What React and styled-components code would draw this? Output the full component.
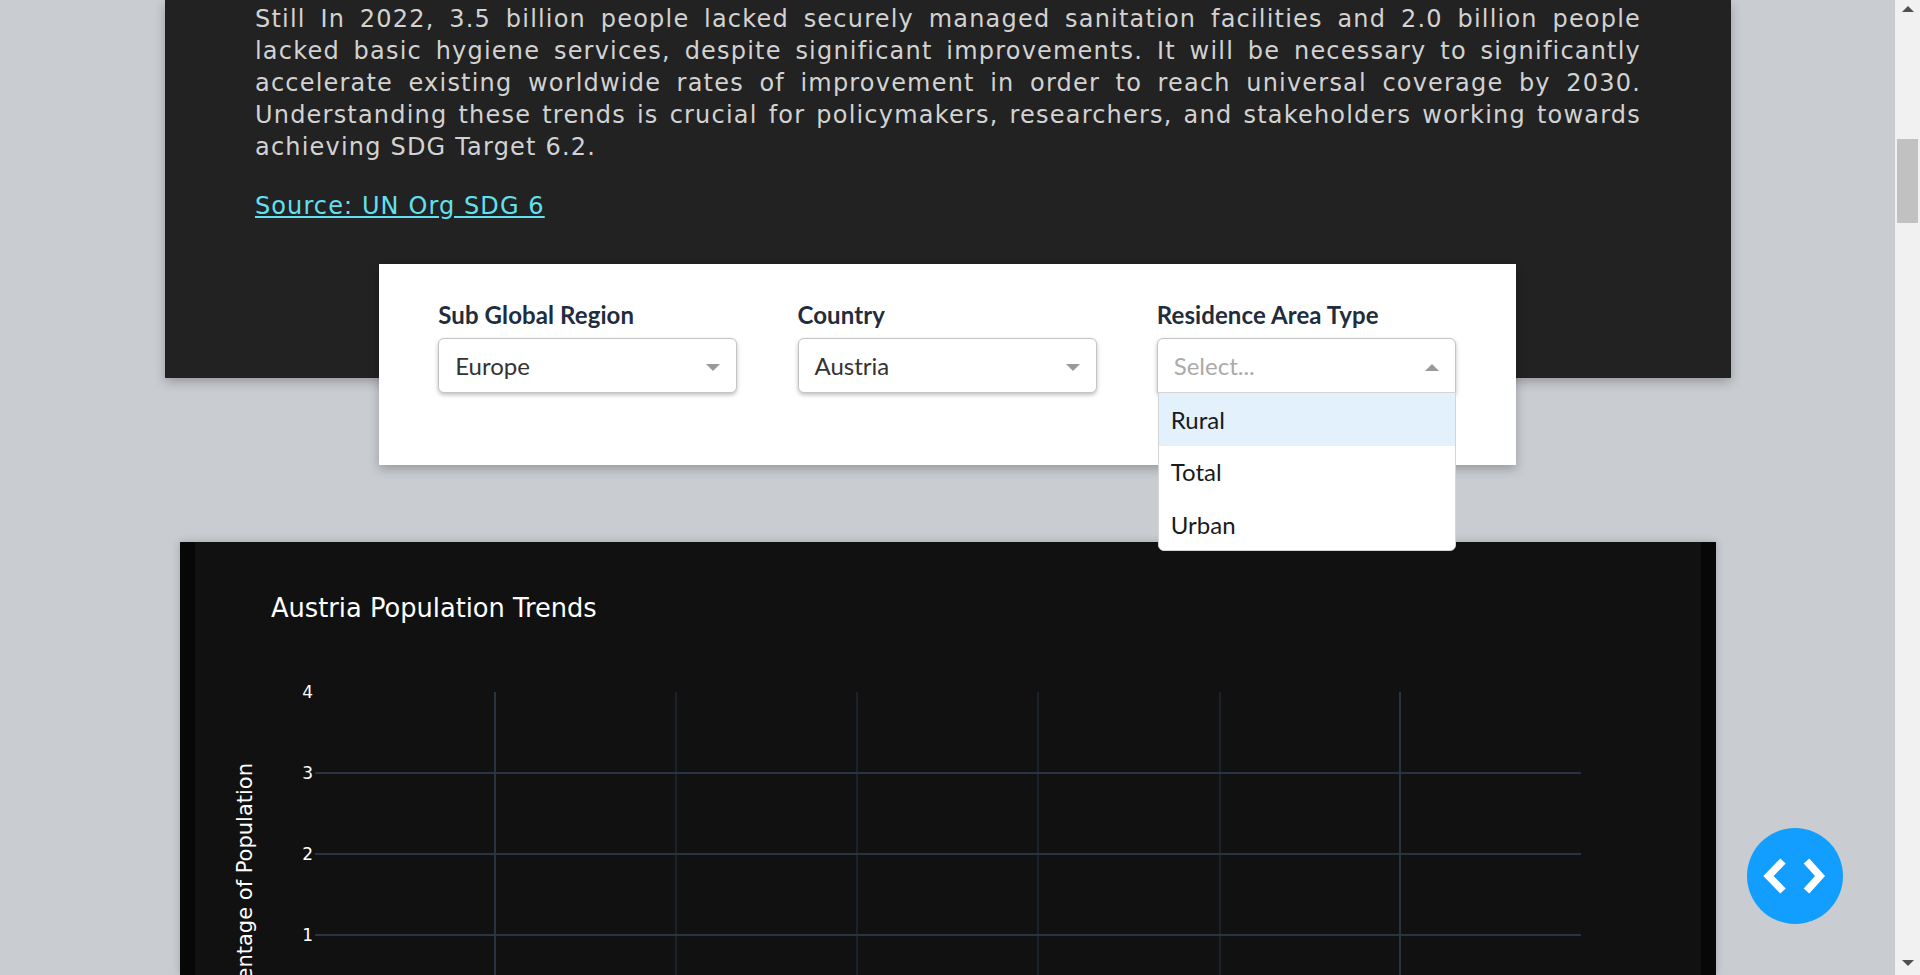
import React from "react";
import styled, { createGlobalStyle } from "styled-components";

const GlobalStyle = createGlobalStyle`
  html, body {
    margin: 0;
    height: 100%;
    overflow: hidden;
    background: #c9ccd1;
  }
  * {
    box-sizing: border-box;
  }
`;

const regions = [
  { label: "Sub Global Region", value: "Europe" },
  { label: "Country", value: "Austria" },
  { label: "Residence Area Type", open: true, options: ["Rural", "Total", "Urban"] },
];

const thinLines = [481, 662, 843, 1025];
const thickLines = [300, 1205];
const rows = [
  { y: 231, tick: "3" },
  { y: 312, tick: "2" },
  { y: 393, tick: "1" },
];

const App = () => {
  return (
    <Page>
      <GlobalStyle />
      <Main>
        <IntroPanel>
          <IntroText>
            Still In 2022, 3.5 billion people lacked securely managed sanitation facilities and 2.0 billion people
            lacked basic hygiene services, despite significant improvements. It will be necessary to significantly
            accelerate existing worldwide rates of improvement in order to reach universal coverage by 2030.
            Understanding these trends is crucial for policymakers, researchers, and stakeholders working towards
            achieving SDG Target 6.2.
          </IntroText>
          <SourceLink href="#source">Source: UN Org SDG 6</SourceLink>
        </IntroPanel>

        <FilterCard>
          {regions.map((region) => (
            <Field key={region.label}>
              <FieldLabel>{region.label}</FieldLabel>
              <SelectBox $open={region.open}>
                <SelectValue $placeholder={!region.value}>{region.value || "Select..."}</SelectValue>
                <Caret $up={region.open} />
                {region.options && (
                  <Menu>
                    {region.options.map((option, i) => (
                      <MenuOption key={option} $active={i === 0}>
                        {option}
                      </MenuOption>
                    ))}
                  </Menu>
                )}
              </SelectBox>
            </Field>
          ))}
        </FilterCard>

        <ChartFrame>
          <ChartSvg width="1506" height="433" viewBox="0 0 1506 433">
            <ChartTitle x="76" y="75">Austria Population Trends</ChartTitle>
            <AxisTitle transform="translate(50 352) rotate(-90)" textAnchor="middle" y="7">
              Percentage of Population
            </AxisTitle>
            {thinLines.map((x) => (
              <line key={x} x1={x} y1="150" x2={x} y2="433" stroke="#283442" strokeWidth="1" />
            ))}
            {thickLines.map((x) => (
              <line key={x} x1={x} y1="150" x2={x} y2="433" stroke="#283442" strokeWidth="2" />
            ))}
            {rows.map((row) => (
              <line key={row.y} x1="120" y1={row.y} x2="1386" y2={row.y} stroke="#283442" strokeWidth="2" />
            ))}
            <TickLabel x="118" y="156" textAnchor="end">4</TickLabel>
            {rows.map((row) => (
              <TickLabel key={row.tick} x="118" y={row.y + 6} textAnchor="end">
                {row.tick}
              </TickLabel>
            ))}
          </ChartSvg>
        </ChartFrame>

        <CodeButton aria-label="Toggle code">
          <svg width="96" height="96" viewBox="0 0 96 96" fill="none" stroke="#fff" strokeWidth="7.5">
            <polyline points="36,33 21.5,48 36,63" />
            <polyline points="59.5,33 73,48 59.5,63" />
          </svg>
        </CodeButton>
      </Main>

      <Scrollbar>
        <ScrollArrow $up />
        <ScrollThumb />
        <ScrollArrow />
      </Scrollbar>
    </Page>
  );
};
export default App;

const Page = styled.div`
  display: flex;
  width: 1920px;
  height: 975px;
  overflow: hidden;
  background: #c9ccd1;
`;

const Main = styled.main`
  flex: 1;
  min-width: 0;
  height: 975px;
  overflow: hidden;
`;

const IntroPanel = styled.section`
  width: 1566px;
  height: 378px;
  margin-left: 165px;
  padding: 3px 90px 0;
  background: #222222;
  box-shadow: 0 4px 10px rgba(0, 0, 0, 0.25);
`;

const IntroText = styled.p`
  margin: 0 0 27px;
  color: #d2d2d2;
  font-family: "DejaVu Sans", sans-serif;
  font-size: 24px;
  line-height: 32px;
  letter-spacing: 1.2px;
  text-align: justify;
`;

const SourceLink = styled.a`
  color: #62e0f0;
  font-family: "DejaVu Sans", sans-serif;
  font-size: 24px;
  line-height: 32px;
  letter-spacing: 1.1px;
  text-decoration: underline;
`;

const FilterCard = styled.section`
  position: relative;
  z-index: 2;
  display: flex;
  gap: 60.25px;
  width: 1137px;
  height: 201px;
  margin: -114px 0 0 379px;
  padding: 31px 60px 0 59.25px;
  background: #ffffff;
  box-shadow: 0 4px 10px rgba(0, 0, 0, 0.25);
`;

const Field = styled.div`
  width: 299px;
`;

const FieldLabel = styled.div`
  height: 43px;
  color: #1f2d3d;
  font-family: Lato, sans-serif;
  font-size: 24px;
  font-weight: 700;
  line-height: 40px;
  letter-spacing: 0.1px;
`;

const SelectBox = styled.div`
  position: relative;
  display: flex;
  align-items: center;
  height: 55px;
  padding: 0 16px;
  background: #ffffff;
  border: 1px solid #c4c4c8;
  border-radius: ${(p) => (p.$open ? "6px 6px 0 0" : "6px")};
  box-shadow: 0 2px 4px rgba(0, 0, 0, 0.25);
`;

const SelectValue = styled.span`
  flex: 1;
  color: ${(p) => (p.$placeholder ? "#aaaaaa" : "#333333")};
  font-family: Lato, sans-serif;
  font-size: 24px;
`;

const Caret = styled.span`
  width: 0;
  height: 0;
  margin-top: 4px;
  border-left: 7px solid transparent;
  border-right: 7px solid transparent;
  border-top: ${(p) => (p.$up ? "0" : "7px solid #999999")};
  border-bottom: ${(p) => (p.$up ? "7px solid #999999" : "0")};
`;

const Menu = styled.div`
  position: absolute;
  top: 53px;
  left: 0;
  right: -1px;
  height: 159px;
  overflow: hidden;
  background: #ffffff;
  border: 1px solid #d4d4d4;
  border-radius: 0 0 6px 6px;
`;

const MenuOption = styled.div`
  display: flex;
  align-items: center;
  height: 52.5px;
  padding-left: 12px;
  background: ${(p) => (p.$active ? "#e3f1fd" : "#ffffff")};
  color: #1a1a1a;
  font-family: Lato, sans-serif;
  font-size: 24px;
`;

const ChartFrame = styled.section`
  width: 1536px;
  height: 433px;
  margin: 77px 0 0 180px;
  padding: 0 15px;
  background: #070707;
  box-shadow: 0 0 8px rgba(0, 0, 0, 0.2);
`;

const ChartSvg = styled.svg`
  display: block;
  background: #111111;
`;

const ChartTitle = styled.text`
  fill: #ffffff;
  font-family: "DejaVu Sans", sans-serif;
  font-size: 25.7px;
`;

const AxisTitle = styled.text`
  fill: #ffffff;
  font-family: "DejaVu Sans", sans-serif;
  font-size: 21px;
`;

const TickLabel = styled.text`
  fill: #ffffff;
  font-family: "DejaVu Sans", sans-serif;
  font-size: 17px;
`;

const CodeButton = styled.button`
  position: fixed;
  right: 77px;
  bottom: 51px;
  z-index: 5;
  display: block;
  width: 96px;
  height: 96px;
  padding: 0;
  border: none;
  border-radius: 50%;
  background: #129eff;
`;

const Scrollbar = styled.aside`
  display: flex;
  flex-direction: column;
  align-items: center;
  flex: 0 0 25px;
  height: 975px;
  padding: 6px 0 9px;
  background: #f1f1f1;
`;

const ScrollArrow = styled.span`
  width: 0;
  height: 0;
  border-left: 6px solid transparent;
  border-right: 6px solid transparent;
  border-top: ${(p) => (p.$up ? "0" : "6px solid #505050")};
  border-bottom: ${(p) => (p.$up ? "6px solid #505050" : "0")};
`;

const ScrollThumb = styled.div`
  width: 21px;
  height: 84px;
  margin: 127px 0 auto;
  background: #c1c1c1;
`;
